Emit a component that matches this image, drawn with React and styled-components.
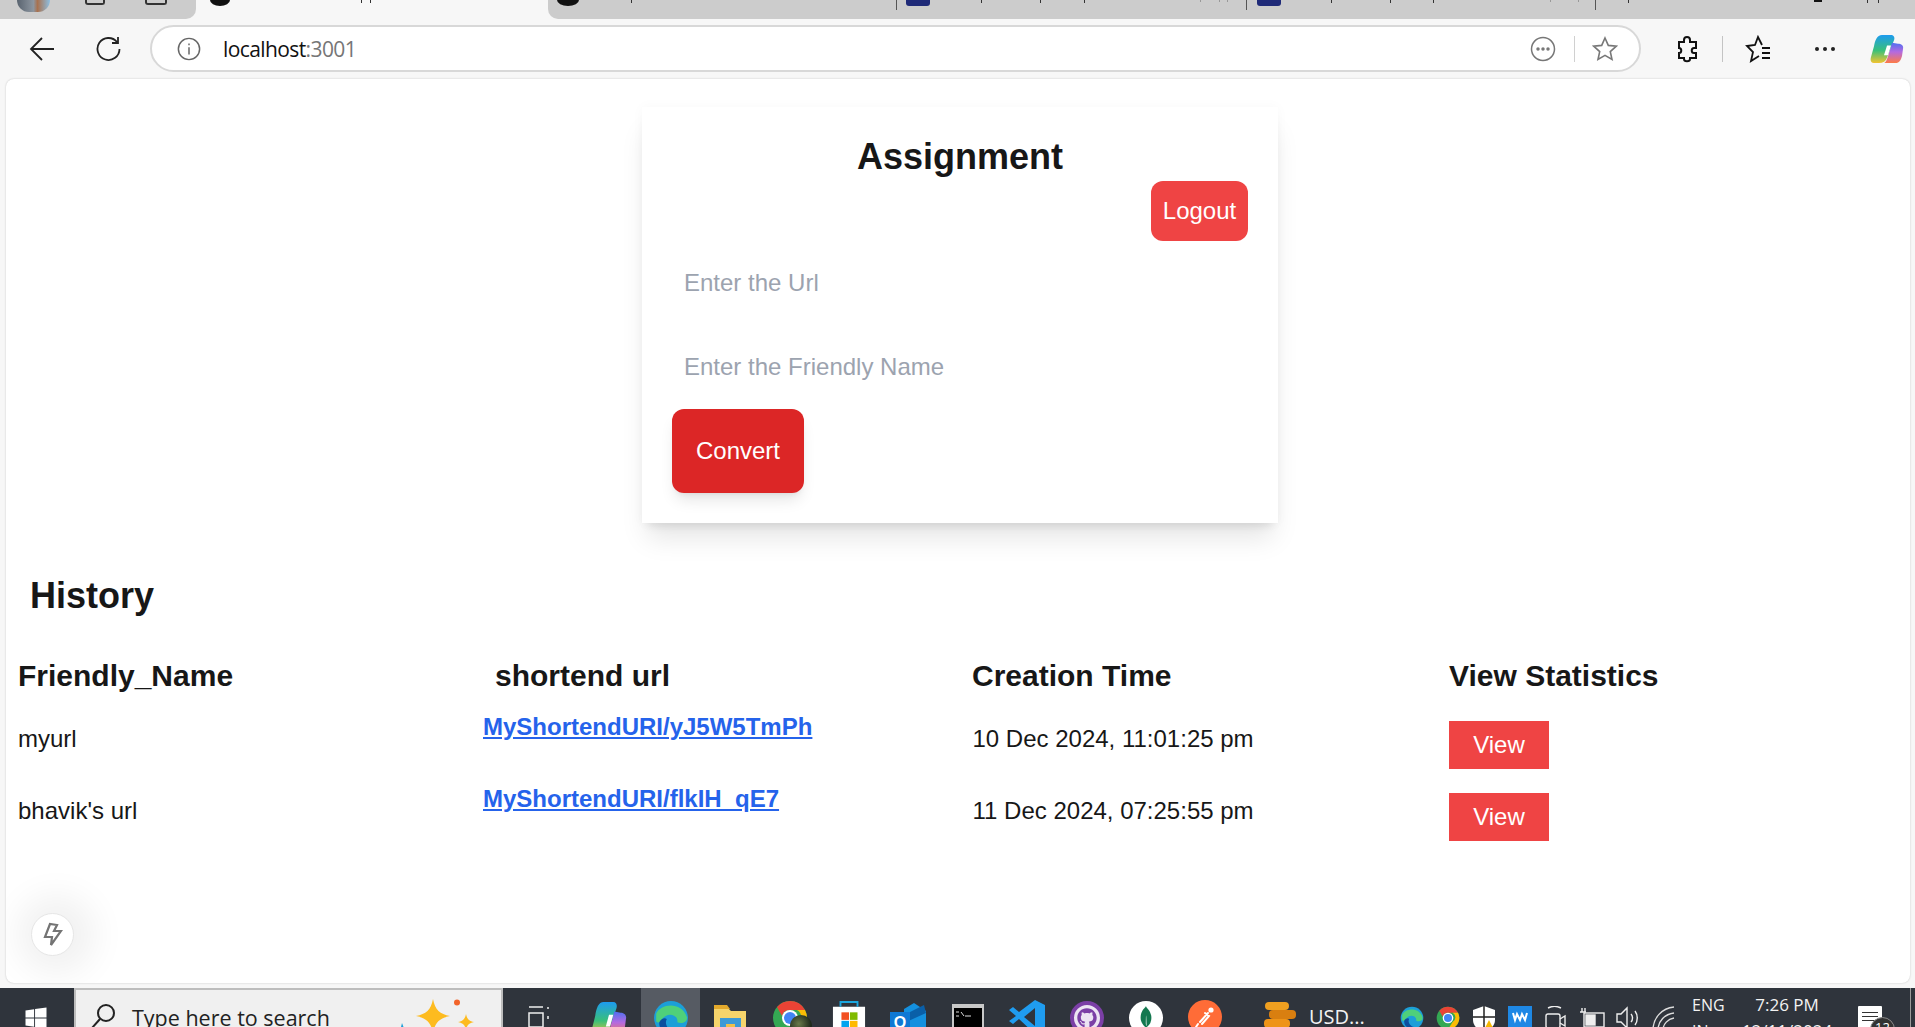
import { createGlobalStyle, styled } from 'styled-components';
import { FaGithub, FaWindows } from 'react-icons/fa';
import { SiMongodb } from 'react-icons/si';

const GlobalStyle = createGlobalStyle`
	html, body {
		margin: 0;
		padding: 0;
		height: 100%;
		overflow: hidden;
		background: #f7f7f7;
		font-family: "Liberation Sans", Arial, sans-serif;
		color: #171717;
	}
	* { box-sizing: border-box; }
`;

const Screen = styled.div`
	width: 1915px;
	height: 1027px;
	display: flex;
	flex-direction: column;
	overflow: hidden;
	background: #f7f7f7;
`;

/* browser tab strip, cut off at the top of the screenshot */
const TabStrip = styled.div`
	height: 19px;
	flex: none;
	display: flex;
	position: relative;
	background: #f7f7f7;
	overflow: hidden;
`;

const StripStart = styled.div`
	width: 196px;
	flex: none;
	display: flex;
	background: #cccccc;
	border-radius: 0 0 10px 0;
	padding-left: 17px;
`;

const Avatar = styled.div`
	width: 33px;
	height: 12px;
	margin-right: 35px;
	border-radius: 0 0 17px 17px;
	background: linear-gradient(90deg, #59636f, #8d96a0 50%, #a8714f 62%, #8dbfe2);
`;

const StripGlyph = styled.div`
	width: ${props => props.$width}px;
	height: 5px;
	margin-right: ${props => props.$gap}px;
	border: 2px solid #333;
	border-top: 0;
	border-radius: 0 0 3px 3px;
`;

const ActiveTab = styled.div`
	width: 352px;
	flex: none;
	padding-left: 14px;
`;

const Favicon = styled.div`
	width: ${props => props.$width || 20}px;
	height: 6px;
	background: #111;
	border-radius: 0 0 50% 50% / 0 0 100% 100%;
`;

const TabRest = styled.div`
	flex: 1;
	display: flex;
	align-items: flex-start;
	background: #cccccc;
	border-radius: 0 0 0 10px;
`;

const Tab = styled.div`
	width: ${props => props.$width}px;
	height: 10px;
	flex: none;
	padding-left: ${props => props.$pad}px;
	border-right: 1px solid #555;
`;

const BlueFavicon = styled.div`
	width: 24px;
	height: 6px;
	background: #1f2a78;
	border-radius: 0 0 3px 3px;
`;

const TickLayer = styled.svg`
	position: absolute;
	left: 0;
	top: 0;
`;

const Toolbar = styled.div`
	height: 60px;
	flex: none;
	display: flex;
	align-items: center;
	padding: 0 0 1px 24px;
`;

const NavButton = styled.div`
	width: 36px;
	height: 36px;
	flex: none;
	display: flex;
	align-items: center;
	justify-content: center;
	margin-right: ${props => props.$gap || 0}px;
`;

const AddressBar = styled.div`
	width: 1491px;
	height: 47px;
	flex: none;
	display: flex;
	align-items: center;
	background: #fff;
	border: 2px solid #d8d8d8;
	border-radius: 24px;
	padding: 0 21px 0 25px;
	margin-right: 28px;
`;

const Host = styled.span`
	font-family: "Open Sans", "Noto Sans", sans-serif;
	font-size: 21px;
	letter-spacing: -0.6px;
	color: #111;
	margin-left: 22px;
	flex: 1;
`;

const Port = styled.span`
	color: #767676;
`;

const BarDivider = styled.div`
	width: 1px;
	height: 26px;
	background: #d0d0d0;
	margin: 0 17px 0 18px;
`;

const ToolDivider = styled.div`
	width: 1px;
	height: 26px;
	background: #c4c4c4;
	margin: 0 17px;
`;

const Panel = styled.main`
	flex: 1;
	margin: 0 5px 5px 6px;
	background: #fff;
	border-radius: 8px;
	box-shadow: 0 0 2px rgba(0, 0, 0, 0.22);
	position: relative;
	overflow: hidden;
`;

const Card = styled.section`
	width: 636px;
	height: 416px;
	margin: 28px 0 0 636px;
	padding: 30px;
	background: #fff;
	box-shadow: 0 20px 25px -5px rgba(0, 0, 0, 0.1), 0 8px 10px -6px rgba(0, 0, 0, 0.1), 0 0 12px rgba(0, 0, 0, 0.03);
`;

const Title = styled.h1`
	margin: 0 0 4px;
	font-size: 36px;
	line-height: 40px;
	font-weight: 700;
	text-align: center;
`;

const LogoutRow = styled.div`
	display: flex;
	justify-content: flex-end;
`;

const RedButton = styled.button`
	border: 0;
	color: #fff;
	font-family: inherit;
	font-size: 24px;
	line-height: 32px;
	padding: 0;
	background: ${props => props.$dark ? '#dc2626' : '#ef4444'};
`;

const LogoutButton = styled(RedButton)`
	width: 97px;
	height: 60px;
	border-radius: 12px;
`;

const Field = styled.input`
	display: block;
	width: 100%;
	height: 84px;
	border: 0;
	outline: 0;
	padding: 0 12px;
	font-family: inherit;
	font-size: 24px;
	background: transparent;
	&::placeholder { color: #9ca3af; opacity: 1; }
`;

const ConvertButton = styled(RedButton)`
	display: block;
	width: 132px;
	height: 84px;
	border-radius: 12px;
	box-shadow: 0 10px 15px -3px rgba(0, 0, 0, 0.1), 0 4px 6px -4px rgba(0, 0, 0, 0.1);
`;

const History = styled.h2`
	margin: 53px 0 0 24px;
	font-size: 36px;
	line-height: 40px;
	font-weight: 700;
`;

const Grid = styled.div`
	display: grid;
	grid-template-columns: 477px 477px 477px 1fr;
	padding-left: 12px;
`;

const HeadRow = styled(Grid)`
	margin-top: 42px;
	margin-bottom: 27px;
`;

const Row = styled(Grid)`
	height: 48px;
	margin-bottom: 24px;
`;

const Head = styled.div`
	font-size: 30px;
	line-height: 36px;
	font-weight: 700;
`;

const Cell = styled.div`
	font-size: 24px;
	line-height: 32px;
	padding-top: 2px;
	padding-left: ${props => props.$inset || 0}px;
`;

const UrlLink = styled.a`
	display: block;
	margin: -10px 0 0 -12px;
	font-size: 24px;
	line-height: 32px;
	font-weight: 700;
	color: #2563eb;
	text-decoration: underline;
`;

const ViewButton = styled(RedButton)`
	width: 100px;
	height: 48px;
`;

const DevBadge = styled.div`
	position: absolute;
	left: 25px;
	bottom: 27px;
	width: 43px;
	height: 43px;
	display: flex;
	align-items: center;
	justify-content: center;
	background: #fff;
	border: 1px solid #e6e6e6;
	border-radius: 50%;
	box-shadow: 4px 0 34px 18px rgba(0, 0, 0, 0.06);
`;

/* windows taskbar, cut off at the bottom */
const Taskbar = styled.footer`
	height: 39px;
	flex: none;
	display: flex;
	background: #2f343c;
	overflow: hidden;
	color: #f2f2f2;
	font-family: "Open Sans", "Noto Sans", sans-serif;
`;

const StartButton = styled.div`
	width: 74px;
	flex: none;
	padding: 18px 0 0 24px;
	color: #fff;
`;

const SearchBox = styled.div`
	width: 429px;
	flex: none;
	display: flex;
	gap: 16px;
	padding: 13px 0 0 14px;
	background: #f0f0f0;
	border-top: 2px solid #bdbdbd;
	border-left: 2px solid #bdbdbd;
	border-right: 2px solid #bdbdbd;
	color: #222;
	font-size: 21.5px;
	line-height: 30px;
	white-space: nowrap;
`;

const Sparkles = styled.svg`
	margin: -4px 0 0 54px;
	flex: none;
`;

const TaskIcons = styled.div`
	display: flex;
	flex: none;
	align-items: flex-start;
	padding-left: 8px;
`;

const TaskSlot = styled.div`
	width: ${props => props.$width || 59}px;
	height: 39px;
	flex: none;
	padding-top: ${props => props.$top || 12}px;
	padding-left: ${props => props.$left || 0}px;
	display: flex;
	justify-content: center;
	background: ${props => props.$active ? '#565b63' : 'transparent'};
`;

const IconCircle = styled.div`
	width: 34px;
	height: 34px;
	flex: none;
	display: flex;
	align-items: center;
	justify-content: center;
	border-radius: 50%;
	background: ${props => props.$bg};
	border: ${props => props.$ring ? `4px solid ${props.$ring}` : '0'};
`;

const ChromeWrap = styled.div`
	width: 36px;
	height: 36px;
	position: relative;
`;

const ChromeBadge = styled.div`
	position: absolute;
	right: -4px;
	top: 15px;
	width: 22px;
	height: 22px;
	border-radius: 50%;
	background: radial-gradient(circle at 40% 40%, #6a7a4a, #1f2a1c 65%);
`;

const UsdLabel = styled.div`
	width: 91px;
	flex: none;
	font-size: 20px;
	line-height: 26px;
	padding-top: 16px;
	white-space: nowrap;
`;

const TrayIcons = styled.div`
	display: flex;
	flex: none;
	gap: 12px;
	padding-top: 18px;
`;

const TrayIcon = styled.div`
	width: 24px;
	height: 30px;
	flex: none;
`;

const Lang = styled.div`
	width: 51px;
	flex: none;
	font-size: 16px;
	line-height: 26px;
	padding: 4px 0 0 16px;
`;

const Clock = styled.div`
	width: 120px;
	flex: none;
	font-size: 17px;
	line-height: 26px;
	padding-top: 4px;
	text-align: center;
`;

const Notify = styled.div`
	width: 24px;
	height: 30px;
	margin: 18px 28px 0 11px;
	padding-top: 6px;
	flex: none;
	position: relative;
	background: #fff;
	border-radius: 1px;
`;

const NotifyLine = styled.div`
	height: 1px;
	margin: 0 4px 3px;
	background: #333;
`;

const NotifyBadge = styled.div`
	position: absolute;
	left: 12px;
	top: 11px;
	width: 25px;
	height: 25px;
	border-radius: 50%;
	border: 1px solid #8a8a8a;
	background: #333;
	color: #fff;
	font-size: 13px;
	line-height: 18px;
	text-align: center;
`;

const DesktopEdge = styled.div`
	width: 1px;
	flex: none;
	background: #9a9a9a;
`;

const rows = [
	{ name: 'myurl', link: 'MyShortendURI/yJ5W5TmPh', time: '10 Dec 2024, 11:01:25 pm' },
	{ name: "bhavik's url", link: 'MyShortendURI/flkIH_qE7', time: '11 Dec 2024, 07:25:55 pm' },
];

// bits of the cut off tab titles that still show at the top edge
const darkTicks = [361, 370, 631, 981, 1040, 1084, 1331, 1390, 1433, 1628, 1867, 1878];
const faintTicks = [1200, 1219, 1227, 1550, 1578];

function EdgeIcon({ size = 34 }) {
	return (
		<svg width={size} height={size} viewBox="0 0 34 34">
			<circle cx="17" cy="17" r="16" fill="#1c9fd8" />
			<path d="M3 13C7 3 27 1 32 16c1 5-5 7-9 5 1-6-6-9-11-6-5 3-6 9-9 5z" fill="#4fd07a" />
			<path d="M13 18c-3 6 3 12 9 12-8 5-17-1-16-9 1-3 5-5 7-3z" fill="#0b4f9e" />
		</svg>
	);
}

function ChromeIcon({ size = 36 }) {
	return (
		<svg width={size} height={size} viewBox="0 0 36 36">
			<circle cx="18" cy="18" r="17" fill="#34a853" />
			<path d="M18 1a17 17 0 0 1 15 9H18a8 8 0 0 0-8 6L5 7A17 17 0 0 1 18 1z" fill="#ea4335" />
			<path d="M33 10a17 17 0 0 1-15 25l7-11a8 8 0 0 0 0-14z" fill="#fbbc05" />
			<circle cx="18" cy="18" r="8" fill="#fff" />
			<circle cx="18" cy="18" r="6" fill="#4285f4" />
		</svg>
	);
}

function CopilotIcon({ id, width = 34, height = 30 }) {
	return (
		<svg width={width} height={height} viewBox="0 0 34 34" preserveAspectRatio="none">
			<defs>
				<linearGradient id={`${id}A`} x1="0" y1="0" x2="0" y2="1">
					<stop offset="0" stopColor="#1d9bf0" />
					<stop offset="0.55" stopColor="#39c07a" />
					<stop offset="1" stopColor="#f4c430" />
				</linearGradient>
				<linearGradient id={`${id}B`} x1="0" y1="0" x2="0" y2="1">
					<stop offset="0" stopColor="#4f6ff0" />
					<stop offset="0.45" stopColor="#b46ae0" />
					<stop offset="1" stopColor="#ff7a45" />
				</linearGradient>
			</defs>
			<path d="M12 1h9c3 0 4 3 3 6l-7 20c-1 4-4 6-8 6H5c-4 0-5-3-4-7l3-12c1-7 3-13 8-13z" fill={`url(#${id}A)`} />
			<path d="M22 10l-2 8c-2 6-3 15-7 15h12c5 0 6-4 7-8l1-8c1-4-2-6-5-6z" fill={`url(#${id}B)`} />
			<path d="M17 13h4l-3 11h-4z" fill="#fff" />
		</svg>
	);
}

function App() {
	return (
		<Screen>
			<GlobalStyle />
			<TabStrip>
				<StripStart>
					<Avatar />
					<StripGlyph $width={20} $gap={40} />
					<StripGlyph $width={22} $gap={0} />
				</StripStart>
				<ActiveTab><Favicon /></ActiveTab>
				<TabRest>
					<Tab $width={349} $pad={9}><Favicon $width={22} /></Tab>
					<Tab $width={350} $pad={9}><BlueFavicon /></Tab>
					<Tab $width={349} $pad={10}><BlueFavicon /></Tab>
				</TabRest>
				<TickLayer width="1915" height="6">
					{darkTicks.map(x => <rect key={x} x={x} y="0" width="1" height="3" fill="#333" />)}
					{faintTicks.map(x => <rect key={x} x={x} y="0" width="1" height="2" fill="#999" />)}
					<rect x="1814" y="0" width="8" height="2" fill="#111" />
				</TickLayer>
			</TabStrip>

			<Toolbar>
				<NavButton $gap={30}>
					<svg width="26" height="26" viewBox="0 0 26 26" fill="none" stroke="#222" strokeWidth="1.8">
						<path d="M25 13H2M13 2 2 13l11 11" />
					</svg>
				</NavButton>
				<NavButton $gap={24}>
					<svg width="26" height="26" viewBox="0 0 26 26" fill="none" stroke="#222" strokeWidth="1.8">
						<path d="M22 6a11 11 0 1 0 2.5 7M23 1v6h-6" />
					</svg>
				</NavButton>
				<AddressBar>
					<svg width="24" height="24" viewBox="0 0 26 26" fill="none" stroke="#666" strokeWidth="1.6">
						<circle cx="13" cy="13" r="11.5" />
						<path d="M13 11v8M13 7v2" />
					</svg>
					<Host>localhost<Port>:3001</Port></Host>
					<svg width="26" height="26" viewBox="0 0 26 26" fill="none" stroke="#777" strokeWidth="1.5">
						<circle cx="13" cy="13" r="11.5" />
						<circle cx="8" cy="13" r="1" fill="#777" />
						<circle cx="13" cy="13" r="1" fill="#777" />
						<circle cx="18" cy="13" r="1" fill="#777" />
					</svg>
					<BarDivider />
					<svg width="26" height="26" viewBox="0 0 26 26" fill="none" stroke="#777" strokeWidth="1.6">
						<path d="M13 2l3.3 7.4 8 .8-6 5.4 1.7 7.9-7-4.1-7 4.1 1.7-7.9-6-5.4 8-.8z" />
					</svg>
				</AddressBar>
				<NavButton>
					<svg width="26" height="28" viewBox="0 0 26 28" fill="none" stroke="#111" strokeWidth="2">
						<path d="M10 5c0-4 6-4 6 0v2h6v6h-2c-3 0-3 5 0 5h2v5h-6v1c0 3-6 3-6 0v-1H5v-5c3 0 3-5 0-5V7h5z" />
					</svg>
				</NavButton>
				<ToolDivider />
				<NavButton $gap={31}>
					<svg width="28" height="28" viewBox="0 0 28 28" fill="none" stroke="#111" strokeWidth="1.8">
						<path d="M18 10 14 2l-3 8-8 1 6 6-2 9 8-5" />
						<path d="M18 13h8M18 18h8M18 23h8" />
					</svg>
				</NavButton>
				<NavButton $gap={27}>
					<svg width="22" height="6" viewBox="0 0 22 6" fill="#222">
						<circle cx="3" cy="3" r="2" />
						<circle cx="11" cy="3" r="2" />
						<circle cx="19" cy="3" r="2" />
					</svg>
				</NavButton>
				<CopilotIcon id="toolCopilot" width={34} height={30} />
			</Toolbar>

			<Panel>
				<Card>
					<Title>Assignment</Title>
					<LogoutRow><LogoutButton>Logout</LogoutButton></LogoutRow>
					<Field placeholder="Enter the Url" />
					<Field placeholder="Enter the Friendly Name" />
					<ConvertButton $dark>Convert</ConvertButton>
				</Card>

				<History>History</History>

				<HeadRow>
					<Head>Friendly_Name</Head>
					<Head>shortend url</Head>
					<Head>Creation Time</Head>
					<Head>View Statistics</Head>
				</HeadRow>
				{rows.map(row => (
					<Row key={row.link}>
						<Cell>{row.name}</Cell>
						<div><UrlLink href="#">{row.link}</UrlLink></div>
						<Cell $inset={0.5}>{row.time}</Cell>
						<div><ViewButton>View</ViewButton></div>
					</Row>
				))}

				<DevBadge>
					<svg width="20" height="25" viewBox="0 0 20 25" fill="none" stroke="#747474" strokeWidth="2.2" strokeLinejoin="miter">
						<path d="M7 2 2 15h7l-1 8 10-14h-7l3-6z" />
					</svg>
				</DevBadge>
			</Panel>

			<Taskbar>
				<StartButton><FaWindows size={24} /></StartButton>
				<SearchBox>
					<svg width="26" height="26" viewBox="0 0 26 26" fill="none" stroke="#222" strokeWidth="2">
						<circle cx="16" cy="10" r="8" />
						<path d="M10 16 2 25" />
					</svg>
					Type here to search
					<Sparkles width="80" height="36" viewBox="0 0 80 36">
						<path d="M33 0c2 11 7 15 17 17-10 2-15 6-17 17-2-11-7-15-17-17 10-2 15-6 17-17z" fill="#fdbb1f" />
						<path d="M66 15c1 5 3 7 8 8-5 1-7 3-8 8-1-5-3-7-8-8 5-1 7-3 8-8z" fill="#fdbb1f" />
						<circle cx="57" cy="3.5" r="3" fill="#f2642a" />
						<path d="M2 24l3 8H0z" fill="#1c9fd8" />
					</Sparkles>
				</SearchBox>
				<TaskIcons>
					<TaskSlot $width={56} $top={18}>
						<svg width="24" height="28" viewBox="0 0 24 28" fill="none" stroke="#eee" strokeWidth="1.5">
							<path d="M2 1h14M2 7h14v14H2zM2 27h14" />
							<path d="M21 1v2M21 10v3M21 26v2" />
						</svg>
					</TaskSlot>
					<TaskSlot $width={74} $left={10} $top={13}><CopilotIcon id="barCopilot" width={36} height={36} /></TaskSlot>
					<TaskSlot $width={59} $active><EdgeIcon size={36} /></TaskSlot>
					<TaskSlot $width={60} $top={17}>
						<svg width="32" height="30" viewBox="0 0 32 30">
							<path d="M0 3h14l3 3h15v24H0z" fill="#f6d46b" />
							<path d="M0 0h13l3 4H0z" fill="#e3a92c" />
							<rect x="6" y="13" width="21" height="17" fill="#3d9ad6" />
							<rect x="12" y="19" width="9" height="11" fill="#f0c04a" />
						</svg>
					</TaskSlot>
					<TaskSlot $width={60}>
						<ChromeWrap>
							<ChromeIcon size={36} />
							<ChromeBadge />
						</ChromeWrap>
					</TaskSlot>
					<TaskSlot $width={58} $top={13}>
						<svg width="34" height="34" viewBox="0 0 36 36">
							<path d="M1 6h34v30H1z" fill="#fff" />
							<path d="M9 6V1h18v5" fill="none" stroke="#1ba7e0" strokeWidth="2" />
							<rect x="10" y="12" width="8" height="8" fill="#f25022" />
							<rect x="19" y="12" width="8" height="8" fill="#7fba00" />
							<rect x="10" y="21" width="8" height="8" fill="#00a4ef" />
							<rect x="19" y="21" width="8" height="8" fill="#ffb900" />
						</svg>
					</TaskSlot>
					<TaskSlot $width={60} $top={15}>
						<svg width="36" height="32" viewBox="0 0 36 32">
							<path d="M14 6 24 0l12 8v24H14z" fill="#1490df" />
							<path d="M14 12 34 2l2 8-22 10z" fill="#0a5fa8" />
							<rect x="0" y="9" width="20" height="20" fill="#0f78d4" />
							<text x="10" y="25" fontSize="16" fontWeight="700" fill="#fff" textAnchor="middle" fontFamily="Liberation Sans">O</text>
						</svg>
					</TaskSlot>
					<TaskSlot $width={59} $top={16}>
						<svg width="32" height="30" viewBox="0 0 32 30">
							<rect width="32" height="30" fill="#c8c8c8" />
							<rect x="2" y="4" width="28" height="26" fill="#000" />
							<path d="M4 8h3M4 12h3M9 8l3 4M13 12h6" stroke="#ddd" strokeWidth="1" />
						</svg>
					</TaskSlot>
					<TaskSlot $width={60}>
						<svg width="36" height="34" viewBox="0 0 36 34">
							<path d="M26 0l10 5v24l-10 5L10 19l-6 5-4-3 7-5-7-6 4-3 6 5z" fill="#1f9cf0" />
							<path d="M26 8 15 17l11 9z" fill="#2f343c" />
						</svg>
					</TaskSlot>
					<TaskSlot $width={59} $top={13}>
						<IconCircle $bg="#ece4f3" $ring="#7b3fa6"><FaGithub size={20} color="#7b3fa6" /></IconCircle>
					</TaskSlot>
					<TaskSlot $width={59} $top={13}>
						<IconCircle $bg="#fff"><SiMongodb size={24} color="#13784f" /></IconCircle>
					</TaskSlot>
					<TaskSlot $width={59}>
						<IconCircle $bg="#ff6c37">
							<svg width="24" height="24" viewBox="0 0 24 24" fill="none" stroke="#fff" strokeWidth="2" strokeLinecap="round">
								<circle cx="18" cy="5" r="2.6" fill="#fff" stroke="none" />
								<path d="M15 8 7 17M12 8l4 3-7 8M5 19l-2 3" />
							</svg>
						</IconCircle>
					</TaskSlot>
					<TaskSlot $width={75} $left={16} $top={14}>
						<svg width="32" height="26" viewBox="0 0 32 26">
							<rect x="1" y="0" width="24" height="8" rx="4" fill="#f0a020" />
							<rect x="5" y="8" width="27" height="9" rx="4" fill="#d97f10" />
							<rect x="0" y="17" width="26" height="9" rx="4" fill="#ee9418" />
						</svg>
					</TaskSlot>
				</TaskIcons>
				<UsdLabel>USD...</UsdLabel>
				<TrayIcons>
					<TrayIcon><EdgeIcon size={24} /></TrayIcon>
					<TrayIcon><ChromeIcon size={24} /></TrayIcon>
					<TrayIcon>
						<svg width="24" height="26" viewBox="0 0 24 26">
							<path d="M12 0l11 4v10c0 6-5 10-11 12C6 24 1 20 1 14V4z" fill="#fff" />
							<path d="M12 0v26M1 11h22" stroke="#222" strokeWidth="1.5" />
							<path d="M17 14l6 12H11z" fill="#f5b800" />
						</svg>
					</TrayIcon>
					<TrayIcon>
						<svg width="24" height="26" viewBox="0 0 24 26">
							<rect width="24" height="26" fill="#1e88e5" />
							<path d="M5 7l2 7 2-6 3 6 2-6 3 6 2-7" fill="none" stroke="#fff" strokeWidth="2" />
						</svg>
					</TrayIcon>
					<TrayIcon>
						<svg width="24" height="26" viewBox="0 0 24 26" fill="none" stroke="#eee" strokeWidth="1.4">
							<path d="M4 2c4-2 9-2 13 0" />
							<rect x="2" y="8" width="14" height="14" rx="2" />
							<path d="M16 13l5-3v10l-5-3" />
						</svg>
					</TrayIcon>
					<TrayIcon>
						<svg width="26" height="24" viewBox="0 0 26 24" fill="none" stroke="#eee" strokeWidth="1.4">
							<rect x="4" y="7" width="20" height="14" />
							<rect x="6" y="9" width="9" height="10" fill="#eee" />
							<path d="M0 6h6M2 2v4M5 2v4" />
						</svg>
					</TrayIcon>
					<TrayIcon>
						<svg width="24" height="24" viewBox="0 0 24 24" fill="none" stroke="#eee" strokeWidth="1.4">
							<path d="M1 8h4l6-6v20l-6-6H1z" />
							<path d="M15 8c2 2 2 6 0 8M19 5c3 4 3 10 0 14" />
						</svg>
					</TrayIcon>
					<TrayIcon>
						<svg width="24" height="26" viewBox="0 0 24 26" fill="none" stroke="#ddd" strokeWidth="1.4">
							<path d="M1 24C1 12 10 2 22 1M6 24c0-9 7-16 16-17M11 24c0-6 5-11 11-12" />
						</svg>
					</TrayIcon>
				</TrayIcons>
				<Lang>ENG<br />IN</Lang>
				<Clock>7:26 PM<br />12/11/2024</Clock>
				<Notify>
					<NotifyLine />
					<NotifyLine />
					<NotifyLine />
					<NotifyBadge>12</NotifyBadge>
				</Notify>
				<DesktopEdge />
			</Taskbar>
		</Screen>
	);
}

export default App
